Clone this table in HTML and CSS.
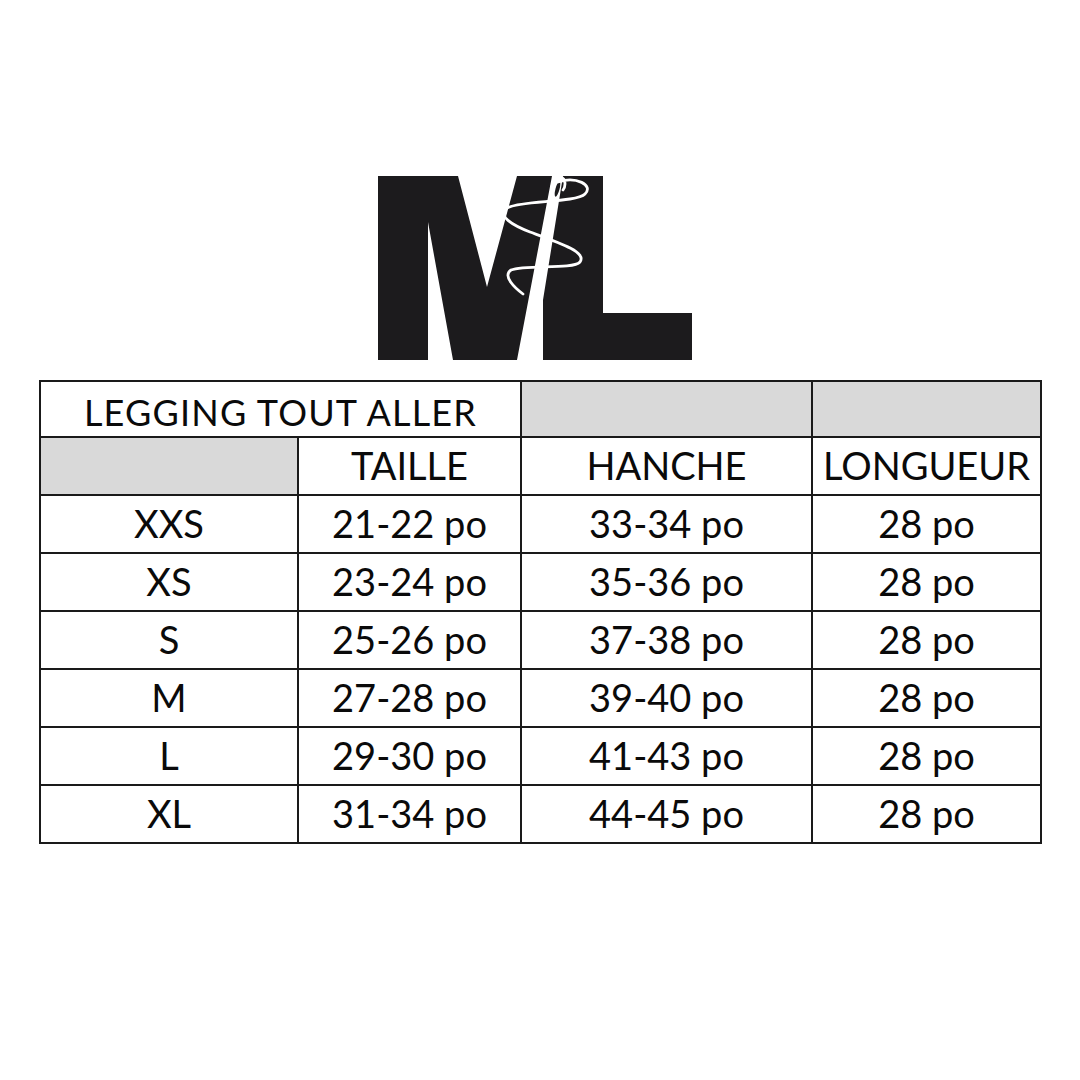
FILE: index.html
```html
<!DOCTYPE html>
<html lang="fr">
<head>
<meta charset="utf-8">
<title>Legging Tout Aller - Tableau des tailles</title>
<link rel="stylesheet" href="styles.css">
</head>
<body>
<div class="page">
  <div class="logo-row">
    <svg class="logo" viewBox="378 176 314 184" width="314" height="184" aria-label="ML">
      <polygon fill="#1c1b1d" points="378,176 458,176 487,287 517,176 552,176 517,360 453,360 428,222 428,360 378,360"/>
      <polygon fill="#1c1b1d" points="563,176 603,176 603,313 692,313 692,360 543,360 543,300"/>
      <ellipse cx="557.5" cy="189" rx="2" ry="8" fill="#1c1b1d" transform="rotate(15 557.5 189)"/>
      <path d="M552,197 C550,186 554,176 560,177 C566,178 566,186 563,190 M558,182 C576,176 594,185 585,194 C576,203 520,200 507,208 C497,216 512,225 530,232 C560,243 587,252 580,262 C573,270 525,264 511,270 C502,276 515,288 523,294" fill="none" stroke="#fff" stroke-width="2.8" stroke-linecap="round"/>
    </svg>
  </div>
  <table class="sizes">
    <colgroup>
      <col class="c1"><col class="c2"><col class="c3"><col class="c4">
    </colgroup>
    <tr class="title-row">
      <td colspan="2" class="title">LEGGING TOUT ALLER</td>
      <td class="gray"></td>
      <td class="gray"></td>
    </tr>
    <tr>
      <td class="gray"></td>
      <td>TAILLE</td>
      <td>HANCHE</td>
      <td>LONGUEUR</td>
    </tr>
    <tr><td>XXS</td><td>21-22 po</td><td>33-34 po</td><td>28 po</td></tr>
    <tr><td>XS</td><td>23-24 po</td><td>35-36 po</td><td>28 po</td></tr>
    <tr><td>S</td><td>25-26 po</td><td>37-38 po</td><td>28 po</td></tr>
    <tr><td>M</td><td>27-28 po</td><td>39-40 po</td><td>28 po</td></tr>
    <tr><td>L</td><td>29-30 po</td><td>41-43 po</td><td>28 po</td></tr>
    <tr><td>XL</td><td>31-34 po</td><td>44-45 po</td><td>28 po</td></tr>
  </table>
</div>
</body>
</html>
```
FILE: styles.css
```css
html, body {
  margin: 0;
  padding: 0;
  background: #ffffff;
}

.page {
  width: 1080px;
  height: 1080px;
  font-family: "Lato", "Open Sans", "Liberation Sans", sans-serif;
  color: #0a0a0a;
}

.logo-row {
  padding-top: 176px;
  padding-left: 378px;
  height: 184px;
}

.logo {
  display: block;
}

.sizes {
  margin-top: 20px;
  margin-left: 39px;
  border-collapse: collapse;
  table-layout: fixed;
  width: 1003px;
}

.c1 { width: 258px; }
.c2 { width: 223px; }
.c3 { width: 291px; }
.c4 { width: 229px; }

.sizes td {
  border: 2px solid #1a1a1a;
  height: 53px;
  padding: 0 0 3px 0;
  text-align: center;
  vertical-align: middle;
  font-size: 38px;
  line-height: 1;
  white-space: nowrap;
}

.sizes td.gray {
  background: #d9d9d9;
}

.sizes .title-row td {
  height: 49px;
  padding: 5px 0 0 0;
}

.sizes td.title {
  font-size: 36px;
  letter-spacing: 1.2px;
}
```
